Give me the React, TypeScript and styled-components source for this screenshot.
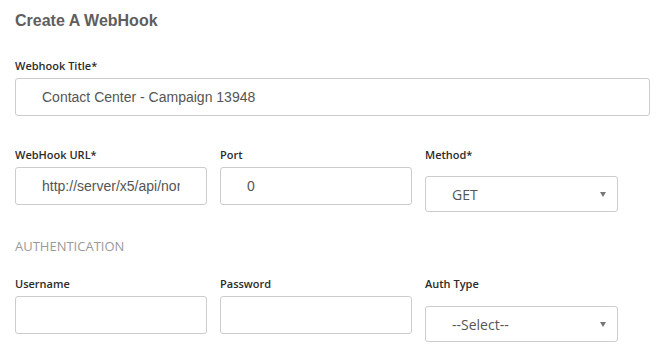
import React from "react";
import styled, { createGlobalStyle } from "styled-components";

const GlobalStyle = createGlobalStyle`
  body {
    margin: 0;
    background: #fff;
    font-family: "Open Sans", "Liberation Sans", sans-serif;
  }
`;

const Page = styled.div`
  width: 670px;
  height: 359px;
  padding: 11px 15px 0;
  box-sizing: border-box;
  overflow: hidden;
`;

const Heading = styled.h2`
  margin: 0;
  font-family: "Liberation Sans", Arial, sans-serif;
  font-size: 16px;
  line-height: 20px;
  font-weight: 700;
  color: #5e5e5e;
`;

const Row = styled.div<{ $top: number }>`
  display: grid;
  grid-template-columns: 192px 192px 193px;
  column-gap: 13px;
  margin-top: ${(p) => p.$top}px;
`;

const FullRow = styled.div<{ $top: number }>`
  margin-top: ${(p) => p.$top}px;
  width: 635px;
`;

const Field = styled.div`
  display: flex;
  flex-direction: column;
`;

const Label = styled.label`
  font-family: "Open Sans", sans-serif;
  font-size: 11px;
  line-height: 15px;
  font-weight: 600;
  color: #2b2b2b;
  margin-bottom: 5px;
`;

const Input = styled.input`
  box-sizing: border-box;
  width: 100%;
  height: 38px;
  padding: 0 26px;
  border: 1px solid #cccccc;
  border-radius: 3px;
  background: #fff;
  font-family: "Liberation Sans", Arial, sans-serif;
  font-size: 14px;
  color: #555;
  outline: none;
`;

const SelectBox = styled.div<{ $offset: number }>`
  position: relative;
  box-sizing: border-box;
  height: 36px;
  margin-top: ${(p) => p.$offset}px;
  padding: 0 26px;
  border: 1px solid #cccccc;
  border-radius: 3px;
  background: #fff;
  display: flex;
  align-items: center;
  font-family: "Open Sans", sans-serif;
  font-size: 14px;
  color: #555;
`;

const Caret = styled.span`
  position: absolute;
  right: 11px;
  top: 50%;
  margin-top: -2px;
  width: 0;
  height: 0;
  border-left: 3.5px solid transparent;
  border-right: 3.5px solid transparent;
  border-top: 5px solid #777;
`;

const Section = styled.div`
  margin-top: 25px;
  font-family: "Open Sans", sans-serif;
  font-size: 13px;
  line-height: 18px;
  color: #9a9a9a;
  text-transform: uppercase;
`;

const Select = ({ value, offset }: { value: string; offset: number }) => (
  <SelectBox $offset={offset}>
    {value}
    <Caret />
  </SelectBox>
);

export default function App() {
  return (
    <>
      <GlobalStyle />
      <Page>
        <Heading>Create A WebHook</Heading>
        <FullRow $top={27}>
          <Field>
            <Label>Webhook Title*</Label>
            <Input defaultValue="Contact Center - Campaign 13948" />
          </Field>
        </FullRow>
        <Row $top={31}>
          <Field>
            <Label>WebHook URL*</Label>
            <Input defaultValue="http://server/x5/api/non-existent/endpoint" />
          </Field>
          <Field>
            <Label>Port</Label>
            <Input defaultValue="0" />
          </Field>
          <Field>
            <Label>Method*</Label>
            <Select value="GET" offset={9} />
          </Field>
        </Row>
        <Section>Authentication</Section>
        <Row $top={21}>
          <Field>
            <Label>Username</Label>
            <Input />
          </Field>
          <Field>
            <Label>Password</Label>
            <Input type="password" />
          </Field>
          <Field>
            <Label>Auth Type</Label>
            <Select value="--Select--" offset={10} />
          </Field>
        </Row>
      </Page>
    </>
  );
}
